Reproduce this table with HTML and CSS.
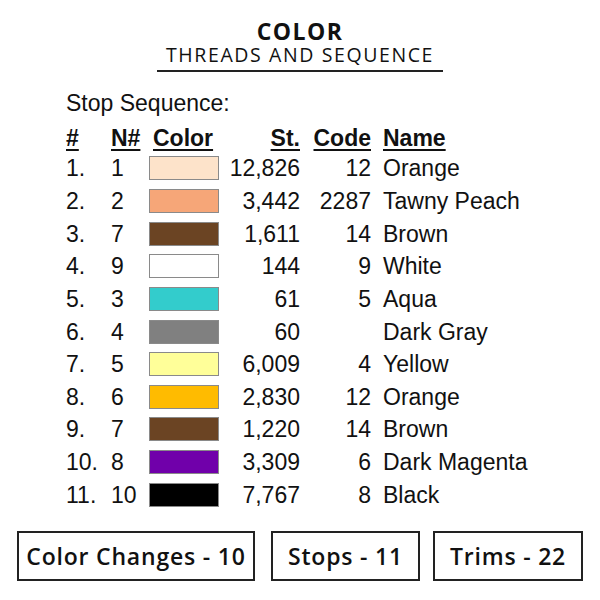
FILE: index.html
```html
<!DOCTYPE html>
<html>
<head>
<meta charset="utf-8">
<link rel="stylesheet" href="styles.css">
</head>
<body>
<div class="page">
  <header class="head">
    <div class="title">COLOR</div>
    <div class="subtitle">THREADS AND SEQUENCE</div>
    <div class="rule"></div>
  </header>
  <div class="list">
    <div class="caption">Stop Sequence:</div>
    <div class="grid">
      <div class="h">#</div><div class="h">N#</div><div class="h">Color</div><div class="h r">St.</div><div class="h r">Code</div><div class="h nm">Name</div>

      <div>1.</div><div>1</div><div><span class="sw c-peach"></span></div><div class="r">12,826</div><div class="r">12</div><div class="nm">Orange</div>
      <div>2.</div><div>2</div><div><span class="sw c-tawny"></span></div><div class="r">3,442</div><div class="r">2287</div><div class="nm">Tawny Peach</div>
      <div>3.</div><div>7</div><div><span class="sw c-brown"></span></div><div class="r">1,611</div><div class="r">14</div><div class="nm">Brown</div>
      <div>4.</div><div>9</div><div><span class="sw c-white"></span></div><div class="r">144</div><div class="r">9</div><div class="nm">White</div>
      <div>5.</div><div>3</div><div><span class="sw c-aqua"></span></div><div class="r">61</div><div class="r">5</div><div class="nm">Aqua</div>
      <div>6.</div><div>4</div><div><span class="sw c-gray"></span></div><div class="r">60</div><div class="r"></div><div class="nm">Dark Gray</div>
      <div>7.</div><div>5</div><div><span class="sw c-yellow"></span></div><div class="r">6,009</div><div class="r">4</div><div class="nm">Yellow</div>
      <div>8.</div><div>6</div><div><span class="sw c-orange"></span></div><div class="r">2,830</div><div class="r">12</div><div class="nm">Orange</div>
      <div>9.</div><div>7</div><div><span class="sw c-brown"></span></div><div class="r">1,220</div><div class="r">14</div><div class="nm">Brown</div>
      <div>10.</div><div>8</div><div><span class="sw c-magenta"></span></div><div class="r">3,309</div><div class="r">6</div><div class="nm">Dark Magenta</div>
      <div>11.</div><div>10</div><div><span class="sw c-black"></span></div><div class="r">7,767</div><div class="r">8</div><div class="nm">Black</div>
    </div>
  </div>
  <div class="stats">
    <div class="box b1">Color Changes - 10</div>
    <div class="box b2">Stops - 11</div>
    <div class="box b3">Trims - 22</div>
  </div>
</div>
</body>
</html>
```
FILE: styles.css
```css
html, body {
  margin: 0;
  padding: 0;
  background: #fff;
}
.page {
  width: 600px;
  height: 600px;
  color: #111;
  display: flex;
  flex-direction: column;
}
.head {
  display: flex;
  flex-direction: column;
  align-items: center;
  padding-top: 19px;
  font-family: "Open Sans", "DejaVu Sans", sans-serif;
}
.title {
  font-size: 23px;
  font-weight: 700;
  line-height: 24px;
  letter-spacing: 1.4px;
}
.subtitle {
  font-size: 19.5px;
  line-height: 24px;
  letter-spacing: 1.6px;
}
.rule {
  width: 286px;
  height: 2px;
  background: #222;
  margin-top: 3px;
}
.list {
  padding-left: 66px;
  font-family: "Liberation Sans", Arial, sans-serif;
  font-size: 23px;
  color: #111;
}
.caption {
  margin-top: 17px;
  line-height: 28px;
}
.grid {
  display: grid;
  grid-template-columns: 45px 38px 70px 81px 71px auto;
  grid-template-rows: 28px;
  grid-auto-rows: 32.65px;
  align-items: center;
  margin-top: 7px;
}
.grid > div {
  line-height: 28px;
  white-space: nowrap;
}
.h {
  font-weight: 700;
  text-decoration: underline;
  text-decoration-thickness: 2px;
  text-underline-offset: 3px;
}
.h:nth-child(3) { padding-left: 4px; }
.r { text-align: right; }
.nm { padding-left: 12px; }
.sw {
  display: block;
  width: 68px;
  height: 22px;
  border: 1px solid #8a8a8a;
}
.c-peach { background: #fde3ca; }
.c-tawny { background: #f6a678; }
.c-brown { background: #6b4423; }
.c-white { background: #ffffff; }
.c-aqua { background: #33cccc; }
.c-gray { background: #808080; }
.c-yellow { background: #ffff99; }
.c-orange { background: #ffbb00; }
.c-magenta { background: #7000aa; }
.c-black { background: #000000; }
.stats {
  display: flex;
  margin-top: 20px;
  padding-left: 17px;
  font-family: "Open Sans", "DejaVu Sans", sans-serif;
  font-weight: 600;
  font-size: 23px;
}
.box {
  height: 45px;
  border: 2px solid #222;
  display: flex;
  align-items: center;
  justify-content: center;
  letter-spacing: 0.8px;
  padding-bottom: 1px;
  box-sizing: content-box;
}
.b1 { width: 234px; }
.b2 { width: 145px; margin-left: 16px; }
.b3 { width: 146px; margin-left: 13px; }
```
